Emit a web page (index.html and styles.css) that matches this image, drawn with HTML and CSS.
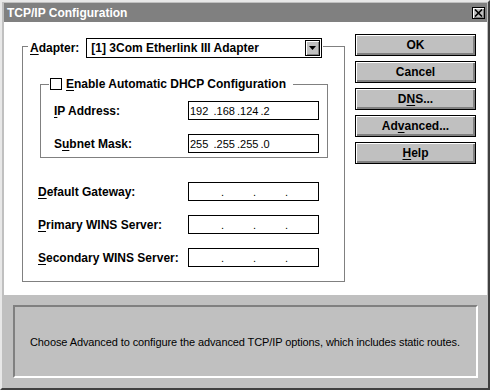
FILE: index.html
```html
<!DOCTYPE html>
<html lang="en">

<head>
    <meta charset="UTF-8">
    <title>TCP/IP Configuration</title>
    <link rel="stylesheet" href="styles.css">
</head>

<body>
    <div class="window">
        <div class="titlebar">
            <span class="title">TCP/IP Configuration</span>
            <span class="close-btn">
                <svg width="9" height="8" viewBox="0 0 9 8"><path d="M1 0.5 L8 7.5 M8 0.5 L1 7.5" stroke="#000" stroke-width="1.6" fill="none"/></svg>
            </span>
        </div>

        <div class="dialog">
            <fieldset class="group adapter-group">
                <legend class="adapter-legend">
                    <span class="adapter-label"><u>A</u>dapter:</span>
                    <div class="combo">
                        <span class="combo-text">[1] 3Com Etherlink III Adapter</span>
                        <span class="combo-btn">
                            <svg width="7" height="4" viewBox="0 0 7 4"><path d="M0 0 H7 L3.5 4 Z" fill="#000"/></svg>
                        </span>
                    </div>
                </legend>

                <fieldset class="group dhcp-group">
                    <legend class="dhcp-legend"><span class="checkbox"></span><u>E</u>nable Automatic DHCP Configuration</legend>
                    <div class="field-row dhcp-row">
                        <span class="field-label"><u>I</u>P Address:</span>
                        <div class="ip-box filled"><span>192</span><span>.168</span><span>.124</span><span>.2</span></div>
                    </div>
                    <div class="field-row dhcp-row">
                        <span class="field-label">S<u>u</u>bnet Mask:</span>
                        <div class="ip-box filled"><span>255</span><span>.255</span><span>.255</span><span>.0</span></div>
                    </div>
                </fieldset>

                <div class="field-row outer-row">
                    <span class="field-label"><u>D</u>efault Gateway:</span>
                    <div class="ip-box empty"><span>.</span><span>.</span><span>.</span></div>
                </div>
                <div class="field-row outer-row">
                    <span class="field-label"><u>P</u>rimary WINS Server:</span>
                    <div class="ip-box empty"><span>.</span><span>.</span><span>.</span></div>
                </div>
                <div class="field-row outer-row">
                    <span class="field-label"><u>S</u>econdary WINS Server:</span>
                    <div class="ip-box empty"><span>.</span><span>.</span><span>.</span></div>
                </div>
            </fieldset>

            <div class="buttons">
                <button class="btn">OK</button>
                <button class="btn">Cancel</button>
                <button class="btn">D<u>N</u>S...</button>
                <button class="btn">Ad<u>v</u>anced...</button>
                <button class="btn"><u>H</u>elp</button>
            </div>
        </div>

        <div class="status">
            <div class="status-inset">Choose Advanced to configure the advanced TCP/IP options, which includes static routes.</div>
        </div>
    </div>
</body>

</html>
```

FILE: styles.css
```css
body {
    margin: 0;
    padding: 0;
    background-color: #c0c0c0;
    font-family: "Liberation Sans", Arial, sans-serif;
    font-size: 12px;
    color: #000;
}

u {
    text-decoration-thickness: 1px;
    text-underline-offset: 2px;
}

.window {
    width: 490px;
    height: 390px;
    box-sizing: border-box;
    background-color: #c0c0c0;
    border-top: 2px solid #e8e8e8;
    border-left: 2px solid #e8e8e8;
    border-right: 2px solid #404040;
    border-bottom: 2px solid #404040;
    padding: 1px 1px 0 2px;
}

.titlebar {
    height: 19px;
    background-color: #808080;
    display: flex;
    align-items: center;
    justify-content: space-between;
    padding: 0 2px 0 3px;
}

.title {
    color: #fff;
    font-weight: bold;
    font-size: 12px;
}

.close-btn {
    width: 13px;
    height: 12px;
    box-sizing: border-box;
    background-color: #c0c0c0;
    border: 1px solid #000;
    box-shadow: inset 1px 1px 0 #fff, inset -1px -1px 0 #808080;
    display: flex;
    align-items: center;
    justify-content: center;
}

.dialog {
    height: 273px;
    box-sizing: border-box;
    background-color: #fff;
    display: flex;
    align-items: flex-start;
    padding: 12px 0 0 18px;
}

.group {
    margin: 0;
    padding: 0;
    border: 1px solid #808080;
    min-inline-size: 0;
}

.adapter-group {
    width: 323px;
    height: 248px;
    box-sizing: border-box;
}

.adapter-legend {
    display: flex;
    align-items: center;
    margin-left: 5px;
    padding: 4px 1px 0 2px;
}

.adapter-label {
    font-weight: bold;
    margin-right: 7px;
}

.combo {
    width: 236px;
    height: 20px;
    box-sizing: border-box;
    border: 1px solid #000;
    display: flex;
    align-items: center;
    background-color: #fff;
}

.combo-text {
    flex: 1;
    font-weight: bold;
    padding-left: 4px;
}

.combo-btn {
    width: 15px;
    height: 16px;
    box-sizing: border-box;
    margin-right: 1px;
    background-color: #c0c0c0;
    border: 1px solid #000;
    box-shadow: inset 1px 1px 0 #fff, inset -1px -1px 0 #808080;
    display: flex;
    align-items: center;
    justify-content: center;
}

.dhcp-group {
    width: 288px;
    box-sizing: border-box;
    margin: 19px 0 0 17px;
    padding-bottom: 4px;
}

.dhcp-legend {
    display: flex;
    align-items: center;
    line-height: 14px;
    margin-left: 8px;
    padding: 0 7px 0 1px;
    font-weight: bold;
}

.checkbox {
    width: 12px;
    height: 12px;
    box-sizing: border-box;
    border: 1px solid #000;
    background-color: #fff;
    margin-right: 4px;
}

.field-row {
    display: flex;
    align-items: center;
}

.field-label {
    font-weight: bold;
}

.dhcp-row {
    margin: 10px 0 0 13px;
}

.dhcp-row + .dhcp-row {
    margin-top: 14px;
}

.dhcp-row .field-label {
    width: 134px;
}

.outer-row {
    margin: 24px 0 0 15px;
}

.outer-row + .outer-row {
    margin-top: 14px;
}

.outer-row .field-label {
    width: 150px;
}

.ip-box {
    width: 131px;
    height: 19px;
    box-sizing: border-box;
    border: 1px solid #000;
    display: flex;
    align-items: center;
    background-color: #fff;
    font-size: 11px;
}

.ip-box.filled {
    padding-left: 1px;
}

.ip-box.filled span {
    width: 23.5px;
}

.ip-box.empty {
    padding-left: 32px;
}

.ip-box.empty span {
    width: 32px;
}

.buttons {
    display: flex;
    flex-direction: column;
    gap: 5px;
    margin-left: 10px;
}

.btn {
    width: 121px;
    height: 22px;
    box-sizing: border-box;
    background-color: #c0c0c0;
    border: 1px solid #000;
    box-shadow: inset 1px 1px 0 #fff, inset -2px -2px 0 #808080;
    font-family: "Liberation Sans", Arial, sans-serif;
    font-size: 12px;
    font-weight: bold;
    color: #000;
    padding: 0;
}

.status {
    height: 93px;
    box-sizing: border-box;
    padding: 10px 9px;
}

.status-inset {
    height: 100%;
    box-sizing: border-box;
    border-top: 2px solid #808080;
    border-left: 2px solid #808080;
    border-right: 2px solid #fff;
    border-bottom: 2px solid #fff;
    display: flex;
    align-items: center;
    padding-left: 15px;
    font-size: 11px;
    letter-spacing: -0.1px;
    white-space: nowrap;
}
```
